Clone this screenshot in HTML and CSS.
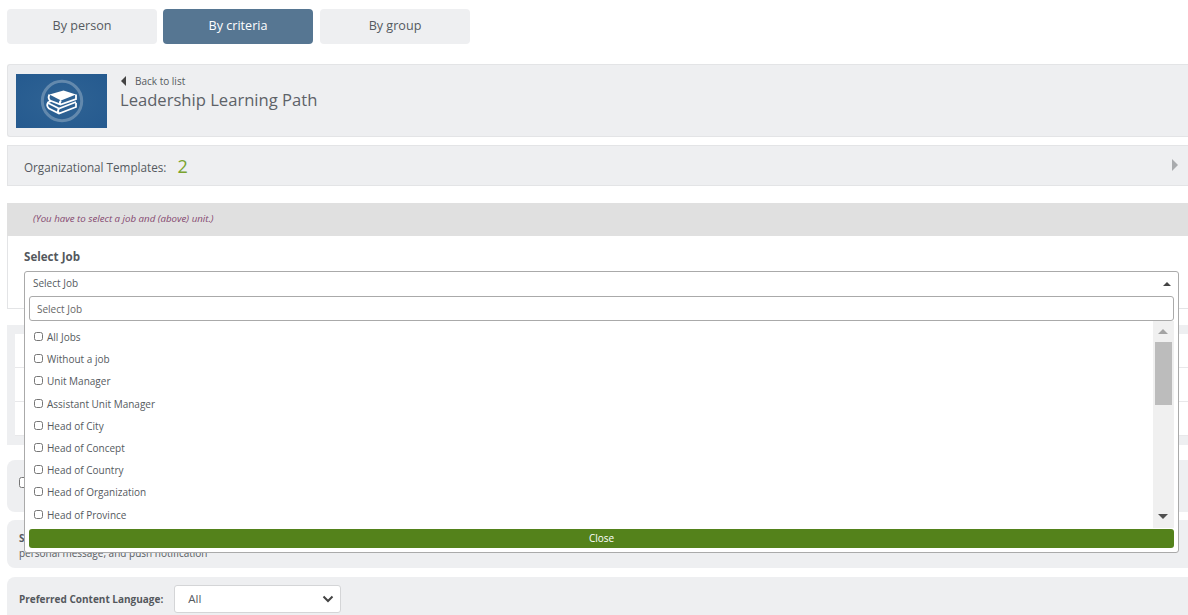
FILE: index.html
```html
<!DOCTYPE html>
<html lang="en">
<head>
  <meta charset="UTF-8" />
  <title>Leadership Learning Path</title>
  <link rel="stylesheet" href="styles.css">
</head>
<body>
  <div class="page">
    <!-- Tabs -->
    <div class="tabs">
      <a class="tab">By person</a>
      <a class="tab active">By criteria</a>
      <a class="tab">By group</a>
    </div>

    <!-- Path header -->
    <div class="path-head">
      <div class="path-thumb">
        <svg width="44" height="44" viewBox="0 0 44 44">
          <circle cx="22" cy="22" r="19.7" fill="none" stroke="#6389ad" stroke-width="3"/>
          <path d="M9.5 15.5 L23.5 11.5 L36 15.5 L21 21.5 Z" fill="#fff"/>
          <path d="M9.5 15.5 Q7.5 19 10 21.5 L20.5 25.5 L36 20 L36 15.5 M20.5 25.5 Q19 23.5 21 21.5" fill="none" stroke="#fff" stroke-width="1.8"/>
          <path d="M11 22 L8 23.5 Q6 27 9 29.5 L19 34.5 L36 28 L36 24 M8 24 L19 29.5 L36 23 M19 29.5 Q17 32 19 34.5" fill="none" stroke="#fff" stroke-width="1.8"/>
        </svg>
      </div>
      <div class="path-info">
        <a class="back-link"><span class="back-arrow"></span>Back to list</a>
        <h1>Leadership Learning Path</h1>
      </div>
    </div>

    <div class="org-row">
      <span class="org-label">Organizational Templates:</span>
      <span class="org-count">2</span>
      <span class="org-arrow"></span>
    </div>

    <!-- Job selection -->
    <div class="notice">(You have to select a job and (above) unit.)</div>
    <div class="job-panel">
      <div class="job-title">Select Job</div>
    </div>

    <div class="unit-panel">
      <div class="unit-row"></div>
      <div class="unit-row"></div>
      <div class="unit-row"></div>
    </div>

    <div class="option-box first"><input type="checkbox" class="option-check"></div>
    <div class="option-box second">
      <div class="option-title">Send notification</div>
      <div class="option-note">personal message, and push notification</div>
    </div>
    <div class="option-box lang">
      <label class="lang-label">Preferred Content Language:</label>
      <div class="lang-select">All
        <svg width="12" height="8" viewBox="0 0 12 8"><path d="M1.5 1.5 L6 6 L10.5 1.5" fill="none" stroke="#444" stroke-width="2"/></svg>
      </div>
    </div>

    <!-- Open multiselect, lies over the page -->
    <div class="ms-drop">
      <div class="ms-head">Select Job<span class="caret-up"></span></div>
      <div class="ms-search">Select Job</div>
      <div class="ms-body">
        <ul class="ms-list">
          <li><input type="checkbox">All Jobs</li>
          <li><input type="checkbox">Without a job</li>
          <li><input type="checkbox">Unit Manager</li>
          <li><input type="checkbox">Assistant Unit Manager</li>
          <li><input type="checkbox">Head of City</li>
          <li><input type="checkbox">Head of Concept</li>
          <li><input type="checkbox">Head of Country</li>
          <li><input type="checkbox">Head of Organization</li>
          <li><input type="checkbox">Head of Province</li>
        </ul>
        <div class="ms-scroll">
          <span class="scroll-up"></span>
          <span class="scroll-thumb"></span>
          <span class="scroll-down"></span>
        </div>
      </div>
      <div class="ms-close">Close</div>
    </div>
  </div>
</body>
</html>
```

FILE: styles.css
```css
* { margin: 0; padding: 0; box-sizing: border-box; }

html, body {
  height: 615px;
  overflow: hidden;
  background: white;
}

body {
  font-family: 'Open Sans', sans-serif;
  color: #555a60;
}

.page {
  position: relative;
  width: 1200px;
  padding: 9px 0 0 7px;
}

/* Tabs */
.tabs {
  display: flex;
  gap: 6px;
  margin-bottom: 20px;
}

.tab {
  width: 150px;
  height: 35px;
  line-height: 33px;
  text-align: center;
  font-size: 12.6px;
  background: #eeeff1;
  border-radius: 4px;
}

.tab.active {
  background: #567692;
  color: white;
}

.tab:last-child { margin-left: 1px; }

/* Path header */
.path-head {
  display: flex;
  height: 73px;
  padding: 9px 8px;
  background: #eeeff1;
  border: 1px solid #e3e4e6;
  border-right: none;
  border-radius: 3px 0 0 3px;
  margin-bottom: 8px;
}

.path-thumb {
  width: 91px;
  height: 54px;
  display: flex;
  align-items: center;
  justify-content: center;
  background: radial-gradient(ellipse at center, #2f6394 0%, #255a8f 100%);
}

.path-info { padding-left: 13px; }

.back-link {
  display: block;
  margin-bottom: 1px;
  font-size: 10px;
  line-height: 14px;
  color: #555a60;
}

.back-arrow {
  display: inline-block;
  width: 0;
  height: 0;
  margin: 0 9px 0 1px;
  border-top: 5px solid transparent;
  border-bottom: 5px solid transparent;
  border-right: 5px solid #444;
  vertical-align: -1px;
}

.path-info h1 {
  font-size: 16.6px;
  font-weight: 400;
  line-height: 22px;
  color: #5d6268;
}

.org-row {
  display: flex;
  align-items: center;
  height: 41px;
  padding: 2px 22px 0 16px;
  background: #eeeff1;
  border: 1px solid #e3e4e6;
  border-right: none;
  margin-bottom: 17px;
  font-size: 11.7px;
}

.org-count {
  margin: -2px 0 0 11px;
  font-size: 18px;
  color: #7aa32e;
}

.org-arrow {
  width: 0;
  height: 0;
  margin: -3px 0 0 auto;
  border-top: 6px solid transparent;
  border-bottom: 6px solid transparent;
  border-left: 6px solid #a9abae;
}

/* Job selection */
.notice {
  height: 33px;
  padding: 10px 0 0 26px;
  background: #e0e0e0;
  font-size: 9.7px;
  font-style: italic;
  line-height: 12px;
  color: #84476f;
}

.job-panel {
  height: 73px;
  padding: 13px 0 0 16px;
  border: 1px solid #e3e4e6;
  border-top: none;
  border-right: none;
  margin-bottom: 16px;
}

.job-title {
  font-size: 11.6px;
  font-weight: 700;
  line-height: 16px;
  color: #54585d;
}

.unit-panel {
  height: 120px;
  padding: 9px 0 9px 8px;
  background: #eeeff1;
  margin-bottom: 15px;
}

.unit-row {
  height: 34px;
  background: white;
  border-bottom: 1px solid #e8e8ea;
}

.option-box {
  background: #eeeff1;
  border-radius: 8px 0 0 8px;
  margin-bottom: 8px;
  padding-left: 12px;
}

.option-box.first {
  height: 52px;
  padding-top: 16px;
}

.option-check {
  display: block;
  width: 11px;
  height: 13px;
}

.option-box.second {
  height: 48px;
  margin-bottom: 9px;
  padding-top: 10px;
  font-size: 10px;
}

.option-title {
  font-weight: 700;
  line-height: 16px;
}

.option-note { line-height: 14px; }

.option-box.lang {
  display: flex;
  align-items: center;
  height: 46px;
  margin-bottom: 0;
  padding-bottom: 3px;
}

.lang-label {
  font-size: 10px;
  font-weight: 700;
  color: #54585d;
}

.lang-select {
  display: flex;
  justify-content: space-between;
  align-items: center;
  width: 167px;
  height: 28px;
  margin-left: 11px;
  padding: 0 6px 0 13px;
  background: white;
  border: 1px solid #d4d5d7;
  border-radius: 3px;
  font-size: 11.5px;
}

/* Open multiselect */
.ms-drop {
  position: absolute;
  left: 24px;
  top: 271px;
  width: 1155px;
  height: 282px;
  background: white;
  border: 1px solid #aaa;
  border-radius: 3px;
  padding: 0 4px;
}

.ms-head {
  position: relative;
  height: 24px;
  padding: 4px 0 0 4px;
  font-size: 10px;
  line-height: 14px;
  color: #555a60;
}

.caret-up {
  position: absolute;
  right: 3px;
  top: 10px;
  width: 0;
  height: 0;
  border-left: 4.5px solid transparent;
  border-right: 4.5px solid transparent;
  border-bottom: 4px solid #444;
}

.ms-search {
  height: 25px;
  padding: 0 7px;
  line-height: 25px;
  border: 1px solid #aaa;
  border-radius: 3px;
  font-size: 10px;
  color: #666;
}

.ms-body {
  display: flex;
  height: 207px;
}

.ms-list {
  flex: 1;
  list-style: none;
  padding: 5px 0 0 5px;
}

.ms-list li {
  display: flex;
  align-items: center;
  height: 22.2px;
  font-size: 10px;
  color: #555a60;
}

.ms-list input {
  width: 9px;
  height: 9px;
  margin: 0 4px 1px 0;
}

.ms-scroll {
  position: relative;
  width: 21px;
  background: #f0f0f0;
}

.scroll-up, .scroll-down {
  position: absolute;
  left: 5px;
  width: 0;
  height: 0;
  border-left: 5px solid transparent;
  border-right: 5px solid transparent;
}

.scroll-up {
  top: 8px;
  border-bottom: 5px solid #a3a3a3;
}

.scroll-down {
  bottom: 9px;
  border-top: 5px solid #505050;
}

.scroll-thumb {
  position: absolute;
  left: 2px;
  top: 21px;
  width: 17px;
  height: 63px;
  background: #bcbcbc;
}

.ms-close {
  height: 19px;
  line-height: 19px;
  margin-top: 1px;
  text-align: center;
  font-size: 10px;
  color: white;
  background: #54821b;
  border-radius: 3px;
}
```
